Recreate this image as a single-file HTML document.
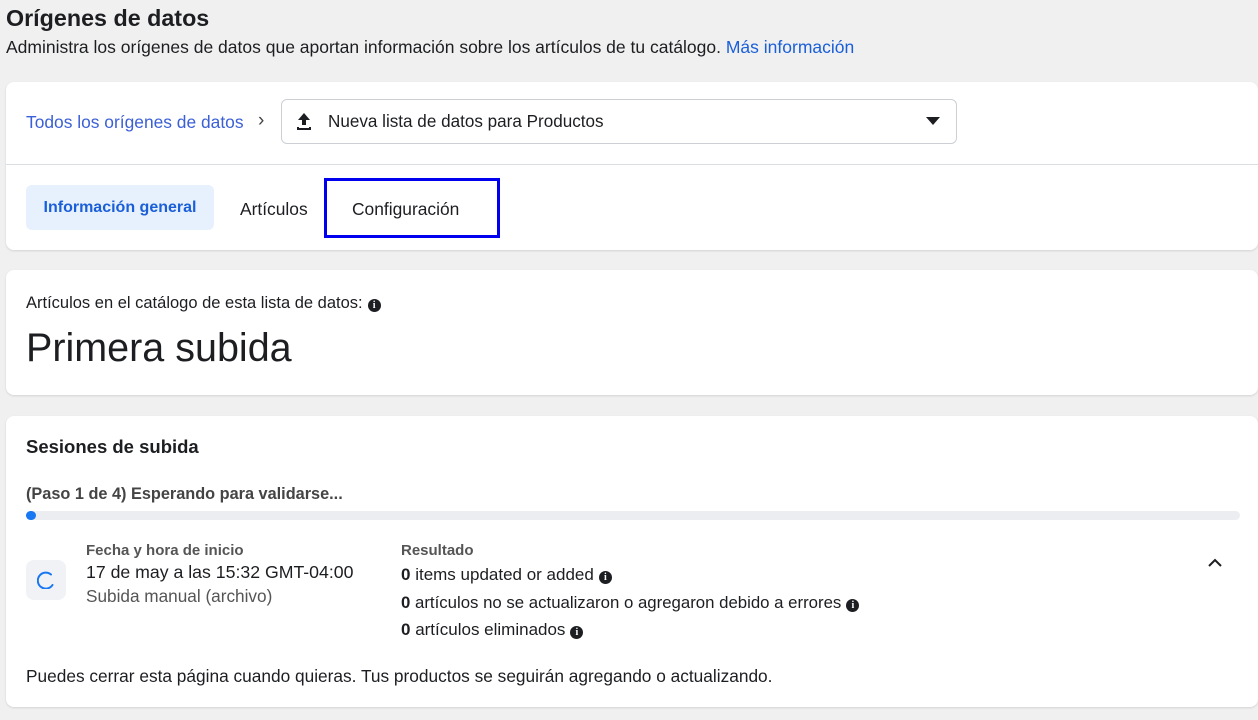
<!DOCTYPE html>
<html><head><meta charset="utf-8"><style>
*{box-sizing:border-box;margin:0;padding:0}
body{width:1258px;height:720px;overflow:hidden;background:#f0f0f0;font-family:"Liberation Sans",sans-serif;color:#1c1e21;position:relative}
.a{position:absolute;white-space:nowrap}
.card{position:absolute;left:6px;width:1252px;background:#fff;border-radius:8px;box-shadow:0 1px 2px rgba(0,0,0,.12)}
.i{display:inline-block;width:13px;height:13px;border-radius:50%;background:#1c1e21;color:#fff;font-size:10px;font-weight:bold;text-align:center;line-height:13px;vertical-align:0px;margin-left:5px;font-family:"Liberation Serif",serif}
</style></head><body>
<div class="a" style="left:6px;top:5px;font-size:23.3px;font-weight:bold">Orígenes de datos</div>
<div class="a" style="left:6px;top:37px;font-size:17.5px;color:#1c1e21">Administra los orígenes de datos que aportan información sobre los artículos de tu catálogo. <span style="color:#1a5fd8">Más información</span></div>

<div class="card" style="top:82px;height:168px">
  <div class="a" style="left:20px;top:30px;font-size:17.4px;color:#3b5fd6">Todos los orígenes de datos</div>
  <div class="a" style="left:252px;top:28px;font-size:19px;color:#444">›</div>
  <div class="a" style="left:275px;top:17px;width:676px;height:45px;border:1px solid #ccd0d5;border-radius:6px">
    <svg class="a" style="left:14px;top:12px" width="16" height="18" viewBox="0 0 16 18"><path d="M8 1L2 8h4v5h4V8h4z" fill="#1c1e21"/><path d="M2 15v2h12v-2" stroke="#1c1e21" stroke-width="2" fill="none"/></svg>
    <div class="a" style="left:46px;top:12px;font-size:17.1px">Nueva lista de datos para Productos</div>
    <svg class="a" style="left:644px;top:17px" width="14" height="9"><path d="M0 0h14L7 8z" fill="#1c1e21"/></svg>
  </div>
  <div class="a" style="left:0;top:82px;width:1252px;height:1px;background:#dadde1"></div>
  <div class="a" style="left:20px;top:103px;width:188px;height:45px;background:#e7f0fd;border-radius:6px;color:#1a5fd8;font-weight:bold;font-size:16px;line-height:45px;text-align:center">Información general</div>
  <div class="a" style="left:234px;top:117px;font-size:17.4px">Artículos</div>
  <div class="a" style="left:318px;top:96px;width:176px;height:60px;border:3px solid #0000ee"></div>
  <div class="a" style="left:346px;top:117px;font-size:17.4px">Configuración</div>
</div>

<div class="card" style="top:270px;height:125px">
  <div class="a" style="left:20px;top:24px;font-size:16.5px">Artículos en el catálogo de esta lista de datos:<span class="i">i</span></div>
  <div class="a" style="left:20px;top:56px;font-size:39.5px">Primera subida</div>
</div>

<div class="card" style="top:416px;height:291px">
  <div class="a" style="left:20px;top:20px;font-size:18.5px;font-weight:bold">Sesiones de subida</div>
  <div class="a" style="left:20px;top:69px;font-size:16.3px;font-weight:bold;color:#444">(Paso 1 de 4) Esperando para validarse...</div>
  <div class="a" style="left:20px;top:95px;width:1214px;height:9px;background:#ebedf0;border-radius:5px"><div style="width:10px;height:9px;background:#1877f2;border-radius:5px"></div></div>
  <div class="a" style="left:20px;top:144px;width:40px;height:40px;background:#f0f2f5;border-radius:8px">
    <svg style="position:absolute;left:11px;top:11px" width="18" height="18" viewBox="0 0 18 18"><path d="M14 3.5A8 8 0 1 0 15.5 14" stroke="#1877f2" stroke-width="2" fill="none" stroke-linecap="round"/></svg>
  </div>
  <div class="a" style="left:80px;top:126px;font-size:15px;font-weight:bold;color:#555">Fecha y hora de inicio</div>
  <div class="a" style="left:80px;top:146px;font-size:17.7px">17 de may a las 15:32 GMT-04:00</div>
  <div class="a" style="left:80px;top:170px;font-size:17.2px;color:#555">Subida manual (archivo)</div>
  <div class="a" style="left:395px;top:126px;font-size:15px;font-weight:bold;color:#555">Resultado</div>
  <div class="a" style="left:395px;top:149px;font-size:17px"><b>0</b> items updated or added<span class="i">i</span></div>
  <div class="a" style="left:395px;top:177px;font-size:16.8px"><b>0</b> artículos no se actualizaron o agregaron debido a errores<span class="i">i</span></div>
  <div class="a" style="left:395px;top:204px;font-size:17px"><b>0</b> artículos eliminados<span class="i">i</span></div>
  <svg class="a" style="left:1202px;top:142px" width="14" height="9"><path d="M1 8l6-6 6 6" stroke="#1c1e21" stroke-width="2" fill="none"/></svg>
  <div class="a" style="left:20px;top:250px;font-size:17.3px">Puedes cerrar esta página cuando quieras. Tus productos se seguirán agregando o actualizando.</div>
</div>
</body></html>
